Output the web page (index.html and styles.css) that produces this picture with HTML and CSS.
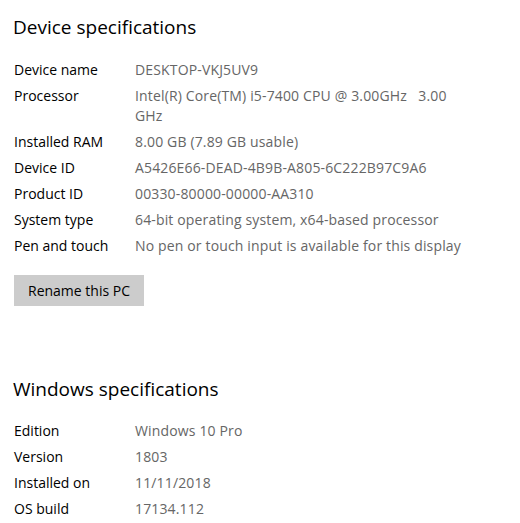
FILE: index.html
```html
<!DOCTYPE html>
<html>
<head>
<meta charset="utf-8">
<link rel="stylesheet" href="styles.css">
</head>
<body>
<main class="page">
  <section class="section">
    <h2 class="title">Device specifications</h2>
    <dl class="specs">
      <dt>Device name</dt><dd>DESKTOP-VKJ5UV9</dd>
      <dt>Processor</dt><dd>Intel(R) Core(TM) i5-7400 CPU @ 3.00GHz&nbsp;&nbsp;&nbsp;3.00 GHz</dd>
      <dt>Installed RAM</dt><dd>8.00 GB (7.89 GB usable)</dd>
      <dt>Device ID</dt><dd>A5426E66-DEAD-4B9B-A805-6C222B97C9A6</dd>
      <dt>Product ID</dt><dd>00330-80000-00000-AA310</dd>
      <dt>System type</dt><dd>64-bit operating system, x64-based processor</dd>
      <dt>Pen and touch</dt><dd>No pen or touch input is available for this display</dd>
    </dl>
    <button class="btn" type="button">Rename this PC</button>
  </section>
  <section class="section section-win">
    <h2 class="title">Windows specifications</h2>
    <dl class="specs">
      <dt>Edition</dt><dd>Windows 10 Pro</dd>
      <dt>Version</dt><dd>1803</dd>
      <dt>Installed on</dt><dd>11/11/2018</dd>
      <dt>OS build</dt><dd>17134.112</dd>
    </dl>
  </section>
</main>
</body>
</html>
```
FILE: styles.css
```css
html, body {
  margin: 0;
  padding: 0;
  background: #ffffff;
}
body {
  font-family: "Open Sans", "Noto Sans", sans-serif;
  color: #000000;
  width: 520px;
  height: 523px;
  overflow: hidden;
}
.page {
  padding: 13px 0 0 14px;
}
.section {
  display: flex;
  flex-direction: column;
  align-items: flex-start;
}
.section-win {
  margin-top: 69px;
}
.title {
  margin: 0 0 0 -1px;
  font-size: 19px;
  font-weight: 400;
  line-height: 28px;
  color: #000;
}
.specs {
  margin: 19px 0 0 0;
  display: grid;
  grid-template-columns: 121px 335px;
  row-gap: 6px;
  font-size: 14px;
  line-height: 20px;
}
.specs dt {
  margin: 0;
  color: #000;
}
.specs dd {
  margin: 0;
  color: #666666;
  letter-spacing: 0.15px;
}
.btn {
  margin-top: 19px;
  height: 31px;
  padding: 0 14px;
  border: none;
  background: #cccccc;
  color: #000;
  font-family: inherit;
  font-size: 14px;
  line-height: 20px;
}
.section-win .specs {
  margin-top: 18px;
}
```
